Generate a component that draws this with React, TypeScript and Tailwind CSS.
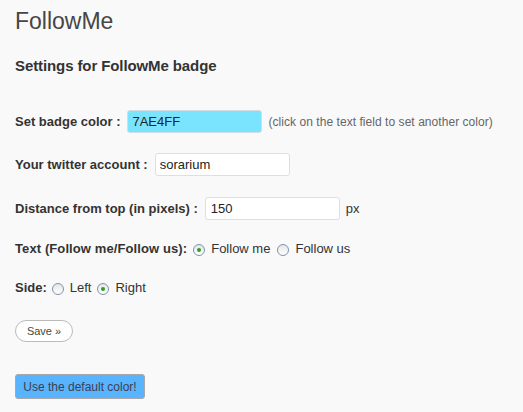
import React from "react";

function Radio({ checked }: { checked?: boolean }) {
  return (
    <span className="relative inline-flex h-[12px] w-[12px] shrink-0 translate-y-[1px] items-center justify-center rounded-full border border-[#7f93ab] bg-gradient-to-b from-[#e6e6e6] to-[#ffffff]">
      {checked && <span className="h-[4px] w-[4px] rounded-full bg-[#2ea01f]" />}
    </span>
  );
}

export default function App() {
  const font = { fontFamily: '"Liberation Sans", Arial, sans-serif' };
  return (
    <div className="min-h-screen w-full bg-[#f9f9f9] pl-[15px] text-[#333333]" style={font}>
      <div className="pt-[8px] text-[23px] leading-[26px] text-[#464646]">FollowMe</div>
      <div className="mt-[23px] text-[15px] font-bold leading-[18px] tracking-[-0.1px] text-[#333333]">Settings for FollowMe badge</div>

      <div className="mt-[35px] flex h-[23px] items-center text-[13px]">
        <span className="font-bold">Set badge color :</span>
        <input
          readOnly
          value="7AE4FF"
          className="ml-[7px] h-[23px] w-[135px] rounded-[3px] border border-[#d4dde1] bg-[#7ae4ff] px-[4px] text-[13px] text-[#222] outline-none"
          style={font}
        />
        <span className="ml-[6px] text-[12px] tracking-[0.05px] text-[#666666]">(click on the text field to set another color)</span>
      </div>

      <div className="mt-[20px] flex h-[23px] items-center text-[13px]">
        <span className="font-bold">Your twitter account :</span>
        <input
          readOnly
          value="sorarium"
          className="ml-[7px] h-[23px] w-[135px] rounded-[3px] border border-[#dfdfdf] bg-white px-[4px] text-[13px] text-[#222] outline-none"
          style={font}
        />
      </div>

      <div className="mt-[21px] flex h-[23px] items-center text-[13px]">
        <span className="font-bold">Distance from top (in pixels) :</span>
        <input
          readOnly
          value="150"
          className="ml-[7px] h-[23px] w-[135px] rounded-[3px] border border-[#dfdfdf] bg-white px-[5px] text-[13px] text-[#222] outline-none"
          style={font}
        />
        <span className="ml-[6px]">px</span>
      </div>

      <div className="mt-[17px] flex h-[23px] items-center text-[13px]">
        <span className="font-bold tracking-[0.1px]">Text (Follow me/Follow us):</span>
        <span className="ml-[6px] flex items-center">
          <Radio checked />
        </span>
        <span className="ml-[6px]">Follow me</span>
        <span className="ml-[7px] flex items-center">
          <Radio />
        </span>
        <span className="ml-[6px]">Follow us</span>
      </div>

      <div className="mt-[16px] flex h-[23px] items-center text-[13px]">
        <span className="font-bold">Side:</span>
        <span className="ml-[5px] flex items-center">
          <Radio />
        </span>
        <span className="ml-[6px]">Left</span>
        <span className="ml-[6px] flex items-center">
          <Radio checked />
        </span>
        <span className="ml-[6px]">Right</span>
      </div>

      <div className="mt-[21px] flex">
        <button
          className="h-[22px] w-[58px] rounded-full border border-[#bbbbbb] bg-white text-[11px] leading-none text-[#464646]"
          style={font}
        >
          Save »
        </button>
      </div>

      <div className="mt-[32px] flex pb-[10px]">
        <button
          className="h-[25px] w-[130px] rounded-[3px] border border-[#a9a9a9] bg-[#58b4ff] text-[12px] leading-none text-[#3f3f4f]"
          style={font}
        >
          Use the default color!
        </button>
      </div>
    </div>
  );
}
